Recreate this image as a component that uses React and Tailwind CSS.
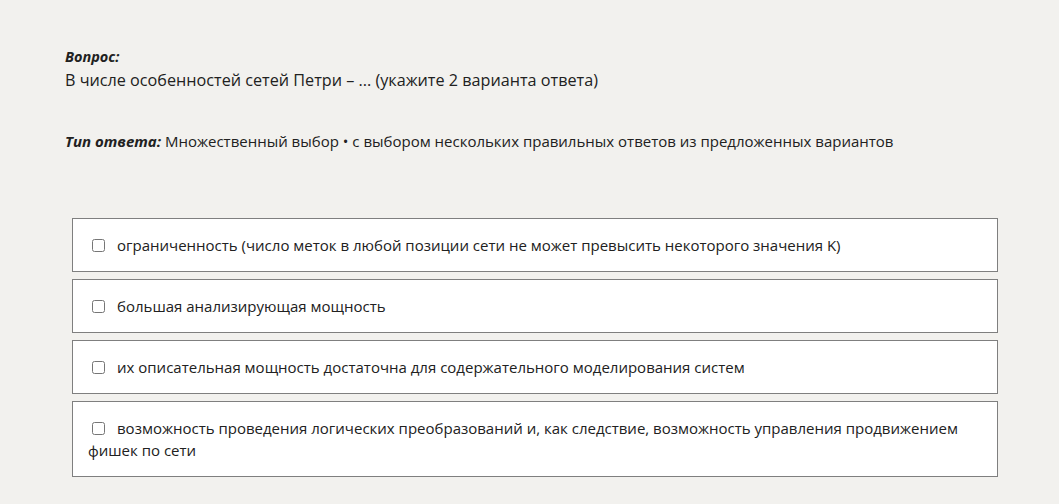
export default function App() {
  const opts = [
    "ограниченность (число меток в любой позиции сети не может превысить некоторого значения K)",
    "большая анализирующая мощность",
    "их описательная мощность достаточна для содержательного моделирования систем",
    "возможность проведения логических преобразований и, как следствие, возможность управления продвижением фишек по сети",
  ];
  return (
    <div className="min-h-[504px] bg-[#f2f1ee] text-[#212121] text-[15px] leading-[22px]" style={{ fontFamily: '"Open Sans", sans-serif' }}>
      <div className="pl-[65px] pr-[61px] pt-[46px]">
        <div className="font-bold italic text-[14.5px]">Вопрос:</div>
        <div className="text-[16.2px] leading-[25px]">В числе особенностей сетей Петри – ... (укажите 2 варианта ответа)</div>
        <div className="mt-[37px]"><span className="font-bold italic">Тип ответа:</span> Множественный выбор • с выбором нескольких правильных ответов из предложенных вариантов</div>
        <div className="mt-[66px] ml-[7px] flex flex-col gap-[7px]">
          {opts.map((o, i) => (
            <div key={i} className="bg-white border border-[#7f7f7f] px-[15px] py-[15px] leading-[22px]">
              <input type="checkbox" className="ml-[4px] mr-[12px] w-[13px] h-[13px] align-[-1px]" />
              {o}
            </div>
          ))}
        </div>
      </div>
    </div>
  );
}
